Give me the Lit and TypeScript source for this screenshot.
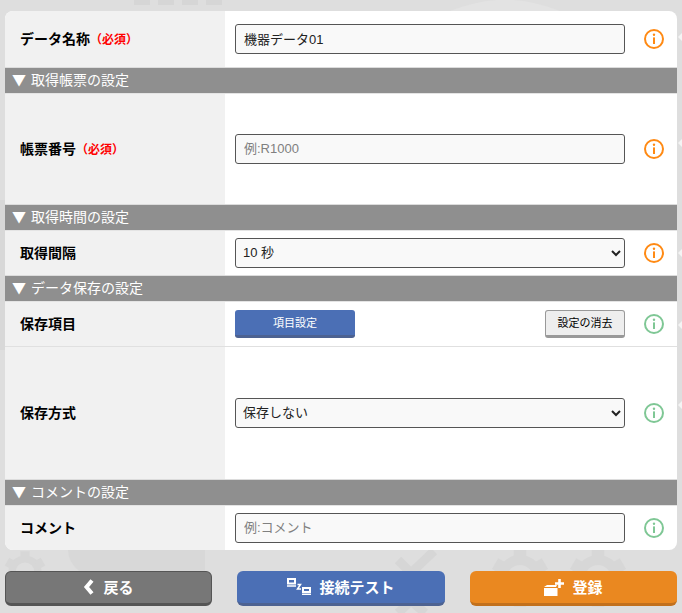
import { LitElement, html, css, svg } from "lit";
import { customElement } from "lit/decorators.js";

const info = (c: string) => html`<svg class="info" viewBox="0 0 20 20" width="20" height="20">
  <circle cx="10" cy="10" r="9" fill="#fff" stroke=${c} stroke-width="2"></circle>
  <circle cx="10" cy="5.8" r="1.2" fill=${c}></circle>
  <rect x="9" y="8.4" width="2" height="6.6" fill=${c}></rect>
</svg>`;

const gear = (x: number, y: number, r: number) => svg`<g transform="translate(${x} ${y})">
  <circle r=${r} fill="none" stroke="#d7d7d7" stroke-width=${r * 0.55}></circle>
  ${[0, 60, 120, 180, 240, 300].map(
    (a) => svg`<rect x=${-r * 0.35} y=${-r * 1.6} width=${r * 0.7} height=${r * 0.6} fill="#d7d7d7" transform="rotate(${a})"></rect>`
  )}
</g>`;

@customElement("app-root")
export class AppRoot extends LitElement {
  static styles = css`
    :host {
      display: block;
      position: relative;
      width: 682px;
      height: 613px;
      overflow: hidden;
      background: #dedede;
      font-family: "Liberation Sans", "Noto Sans CJK JP", sans-serif;
      color: #000;
    }
    .bg { position: absolute; inset: 0; }
    .page {
      position: relative;
      display: flex;
      flex-direction: column;
      padding: 11px 5px 0;
    }
    .card {
      width: 672px;
      height: 539px;
      border-radius: 8px;
      overflow: hidden;
      background: #fff;
      display: flex;
      flex-direction: column;
    }
    .section {
      height: 27px;
      box-sizing: border-box;
      border-top: 1px solid #dcdcdc;
      border-bottom: 1px solid #e4e4e4;
      background: #8f8f8f;
      color: #fff;
      font-size: 14px;
      line-height: 23px;
      padding-left: 7px;
      flex: none;
    }
    .tri {
      font-family: "Noto Sans CJK JP", sans-serif;
      display: inline-block;
      width: 14px;
      margin-right: 5px;
    }
    .row {
      display: grid;
      grid-template-columns: 220px 1fr 52px;
      flex: none;
      box-sizing: border-box;
    }
    .h44 { height: 44px; }
    .h45 { height: 45px; }
    .h56 { height: 56px; }
    .h110 { height: 110px; }
    .h132 { height: 132px; }
    .row.line { border-bottom: 1px solid #e0e0e0; }
    .label {
      background: #f1f1f1;
      display: flex;
      align-items: center;
      padding: 0 0 2px 15px;
      font-size: 14px;
      font-weight: 700;
    }
    .req { color: #f00; font-size: 12px; font-weight: 700; }
    .field {
      display: flex;
      align-items: center;
      justify-content: space-between;
      padding: 0 0 0 10px;
    }
    .tip { display: flex; align-items: center; padding-left: 19px; }
    .info { display: block; }
    input, select {
      width: 390px;
      height: 30px;
      box-sizing: border-box;
      border: 1px solid #555;
      border-radius: 3px;
      background-color: #f9f9f9;
      font-family: inherit;
      font-size: 13px;
      color: #222;
      outline: none;
    }
    input { padding: 0 8px 2px; }
    select { padding: 0 3px 1px; }
    input::placeholder { color: #808080; opacity: 1; }
    .btn {
      box-sizing: border-box;
      height: 28px;
      font-family: inherit;
      font-size: 11px;
      border-radius: 3px;
      padding: 0 0 2px;
    }
    .blue {
      width: 120px;
      border: none;
      border-bottom: 3px solid #4d6291;
      background: #4b6fb5;
      color: #fff;
    }
    .gray {
      width: 80px;
      border: 1px solid #999;
      border-bottom: 3px solid #999;
      background: #eee;
      color: #000;
    }
    .foot {
      display: grid;
      grid-template-columns: 207px 208px 207px;
      column-gap: 25px;
      margin-top: 21px;
    }
    .act {
      height: 35px;
      box-sizing: border-box;
      border-radius: 6px;
      color: #fff;
      font-family: inherit;
      font-size: 15px;
      font-weight: 700;
      display: flex;
      align-items: center;
      justify-content: center;
      gap: 8px;
      padding: 0 0 2px;
      border: none;
    }
    .act svg { display: block; }
    .back { background: #777; border: 1px solid #555; border-bottom: 3px solid #555; }
    .test { background: #4b6fb5; border-bottom: 3px solid #4d6291; }
    .reg { background: #ea8820; border-bottom: 3px solid #c2701c; }
  `;

  private sec(t: string) {
    return html`<div class="section"><span class="tri">▼</span>${t}</div>`;
  }

  render() {
    const orange = "#ff8a14";
    const green = "#7fc795";
    return html`
      <svg class="bg" viewBox="0 0 682 613" width="682" height="613">
        <rect x="134" y="0" width="16" height="5" fill="#d6d6d6"></rect>
        <rect x="158" y="0" width="16" height="5" fill="#d6d6d6"></rect>
        <rect x="182" y="0" width="16" height="5" fill="#d6d6d6"></rect>
        <rect x="206" y="0" width="16" height="5" fill="#d6d6d6"></rect>
        <path d="M450 11C490 -4 520 -4 560 11Z" fill="#e3e3e3"></path>
        <rect x="0" y="200" width="5" height="150" fill="#d8d8d8"></rect>
        <path d="M120 550H205V572H120Z" fill="#d8d8d8"></path>
        <path d="M68 550h78a39 30 0 0 1 -78 0Z" fill="#d8d8d8"></path>
        <path d="M398 560l13 13 23-22" fill="none" stroke="#d6d6d6" stroke-width="9"></path>
        <path d="M398 613l13-12 14 12" fill="none" stroke="#d6d6d6" stroke-width="9"></path>
        ${gear(520, 578, 18)} ${gear(598, 578, 18)} ${gear(25, 572, 13)}
        ${[37, 143, 253, 325, 405].map(
          (y) => svg`<path d="M682 ${y - 4}L678 ${y}L682 ${y + 4}Z" fill="#f4f4f4"></path>`
        )}
      </svg>
      <div class="page">
        <div class="card">
          <div class="row h56">
            <div class="label">データ名称<span class="req">（必須）</span></div>
            <div class="field"><input value="機器データ01" /></div>
            <div class="tip">${info(orange)}</div>
          </div>
          ${this.sec("取得帳票の設定")}
          <div class="row h110">
            <div class="label">帳票番号<span class="req">（必須）</span></div>
            <div class="field"><input placeholder="例:R1000" /></div>
            <div class="tip">${info(orange)}</div>
          </div>
          ${this.sec("取得時間の設定")}
          <div class="row h44">
            <div class="label">取得間隔</div>
            <div class="field"><select><option>10 秒</option></select></div>
            <div class="tip">${info(orange)}</div>
          </div>
          ${this.sec("データ保存の設定")}
          <div class="row line h45">
            <div class="label">保存項目</div>
            <div class="field">
              <button class="btn blue">項目設定</button>
              <button class="btn gray">設定の消去</button>
            </div>
            <div class="tip">${info(green)}</div>
          </div>
          <div class="row h132">
            <div class="label">保存方式</div>
            <div class="field"><select><option>保存しない</option></select></div>
            <div class="tip">${info(green)}</div>
          </div>
          ${this.sec("コメントの設定")}
          <div class="row h44">
            <div class="label">コメント</div>
            <div class="field"><input placeholder="例:コメント" /></div>
            <div class="tip">${info(green)}</div>
          </div>
        </div>
        <div class="foot">
          <button class="act back">
            <svg width="12" height="16" viewBox="0 0 12 16"><path d="M9 1.500 3.500 8 9 14.500" fill="none" stroke="#fff" stroke-width="4"></path></svg>
            戻る
          </button>
          <button class="act test">
            <svg width="24" height="18" viewBox="0 0 24 18" fill="none" stroke="#fff">
              <rect x="1" y="2" width="7" height="4.500" stroke-width="2"></rect>
              <path d="M0 9h9" stroke-width="1.500"></path>
              <rect x="16" y="11" width="7" height="4" stroke-width="2"></rect>
              <path d="M15 17.300h9" stroke-width="1.500"></path>
              <path d="M10.500 7.500h3l-3 4.500h3.500" stroke-width="1.500"></path>
            </svg>
            接続テスト
          </button>
          <button class="act reg">
            <svg width="20" height="20" viewBox="0 0 20 20" fill="#fff">
              <path d="M0 11 3 9H13L12 11zM0 12h13.500v8H0z"></path>
              <path d="M14.200 3h2.600v3.200H20v2.600h-3.200V12h-2.600V8.800H11V6.200h3.200z"></path>
            </svg>
            登録
          </button>
        </div>
      </div>
    `;
  }
}
